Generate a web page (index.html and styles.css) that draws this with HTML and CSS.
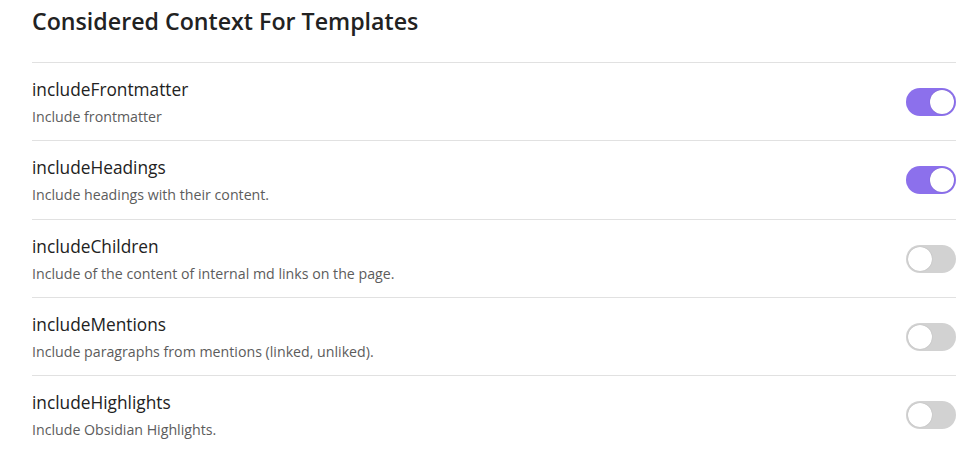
FILE: index.html
```html
<!DOCTYPE html>
<html lang="en">
<head>
<meta charset="utf-8">
<title>Considered Context For Templates</title>
<link rel="stylesheet" href="styles.css">
</head>
<body>
<div class="page">
  <h1 class="heading">Considered Context For Templates</h1>
  <div class="setting">
    <div class="info">
      <div class="name">includeFrontmatter</div>
      <div class="desc">Include frontmatter</div>
    </div>
    <div class="toggle on"><span class="knob"></span></div>
  </div>
  <div class="setting">
    <div class="info">
      <div class="name">includeHeadings</div>
      <div class="desc">Include headings with their content.</div>
    </div>
    <div class="toggle on"><span class="knob"></span></div>
  </div>
  <div class="setting">
    <div class="info">
      <div class="name">includeChildren</div>
      <div class="desc">Include of the content of internal md links on the page.</div>
    </div>
    <div class="toggle"><span class="knob"></span></div>
  </div>
  <div class="setting">
    <div class="info">
      <div class="name">includeMentions</div>
      <div class="desc">Include paragraphs from mentions (linked, unliked).</div>
    </div>
    <div class="toggle"><span class="knob"></span></div>
  </div>
  <div class="setting">
    <div class="info">
      <div class="name">includeHighlights</div>
      <div class="desc">Include Obsidian Highlights.</div>
    </div>
    <div class="toggle"><span class="knob"></span></div>
  </div>
</div>
</body>
</html>
```
FILE: styles.css
```css
html, body {
  margin: 0;
  padding: 0;
  background: #ffffff;
}
body {
  font-family: "Open Sans", "Noto Sans", sans-serif;
  color: #222222;
}
.page {
  padding: 5px 24px 0 32px;
}
.heading {
  margin: 0 0 25px 0;
  font-size: 23.2px;
  line-height: 32px;
  font-weight: 600;
  color: #222222;
}
.setting {
  display: flex;
  align-items: center;
  justify-content: space-between;
  border-top: 1px solid #e1e1e1;
  padding: 15px 0 13.25px 0;
}
.info {
  display: flex;
  flex-direction: column;
  gap: 5px;
}
.name {
  font-size: 17.3px;
  line-height: 24px;
  color: #222222;
}
.desc {
  font-size: 14.2px;
  line-height: 20px;
  color: #5c5c5c;
}
.toggle {
  position: relative;
  width: 50px;
  height: 28px;
  border-radius: 14px;
  background: #d2d2d2;
  box-sizing: border-box;
  flex-shrink: 0;
  margin-top: -1px;
}
.toggle.on {
  background: #8c70ec;
}
.knob {
  position: absolute;
  top: 2px;
  left: 2px;
  width: 24px;
  height: 24px;
  border-radius: 50%;
  background: #ffffff;
  box-shadow: 0 0 1px rgba(0, 0, 0, 0.25);
}
.toggle.on .knob {
  left: 24px;
}
```
